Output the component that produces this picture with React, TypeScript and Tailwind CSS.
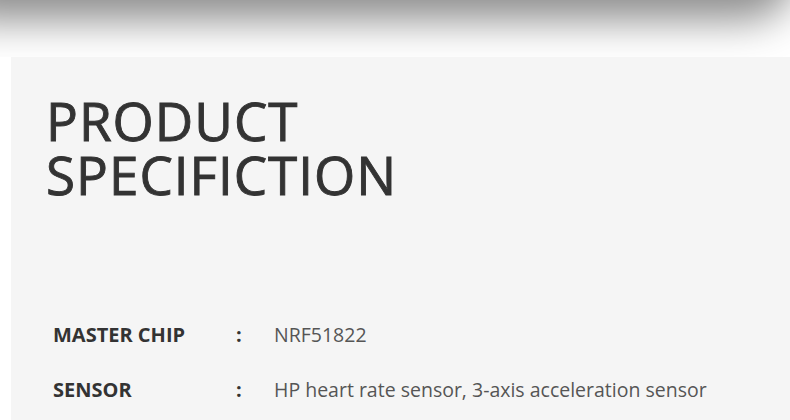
const specs = [
  { label: "MASTER CHIP", value: "NRF51822" },
  { label: "SENSOR", value: "HP heart rate sensor, 3-axis acceleration sensor" },
];

export default function App() {
  return (
    <div className="w-[790px] h-[420px] overflow-hidden bg-white" style={{ fontFamily: '"Open Sans", "Noto Sans", sans-serif' }}>
      <div className="relative h-[57px] overflow-hidden">
        <div className="absolute -top-[40px] -left-[20px] right-[14px] h-[40px] rounded-br-[30px] bg-[#888] shadow-[0_0_40px_20px_rgba(0,0,0,0.45)]" />
      </div>
      <div className="ml-[11px] h-full bg-[#f5f5f5] pl-[35px] pt-[37px]">
        <h1 className="text-[53px] leading-[54px] text-[#333] tracking-[1px] [-webkit-text-stroke:0.9px_#333]">
          PRODUCT
          <br />
          SPECIFICTION
        </h1>
        <div className="mt-[120px] flex flex-col gap-[30px] pl-[7px]">
          {specs.map((s) => (
            <div key={s.label} className="flex items-center text-[20px] leading-[25px]">
              <span className="w-[183px] font-bold text-[#333]">{s.label}</span>
              <span className="w-[38px] font-bold text-[#333]">:</span>
              <span className="text-[19.5px] text-[#555]">{s.value}</span>
            </div>
          ))}
        </div>
      </div>
    </div>
  );
}
